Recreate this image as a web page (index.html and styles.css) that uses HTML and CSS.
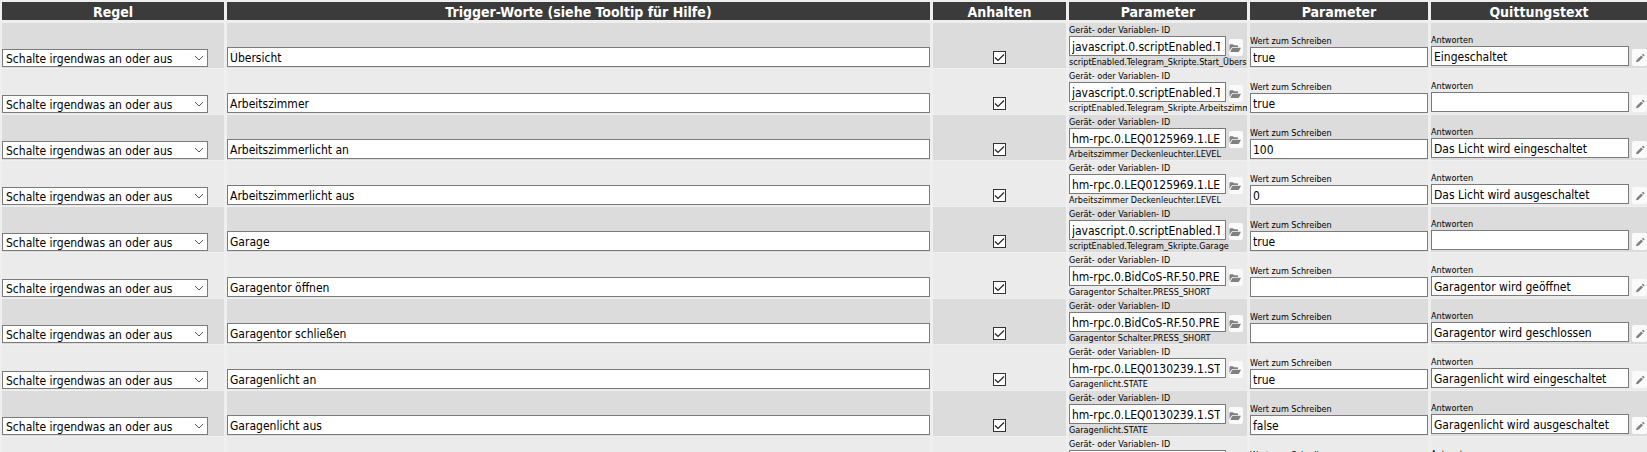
FILE: index.html
```
<!DOCTYPE html>
<html lang="de">
<head>
    <meta charset="UTF-8">
    <meta name="viewport" content="width=device-width, initial-scale=1.0">
    <title>Regeln</title>
    <link rel="stylesheet" href="styles.css">
</head>
<body>
    <div class="rules">
        <table class="rules-table">
            <colgroup>
                <col class="col-rule">
                <col class="col-words">
                <col class="col-stop">
                <col class="col-id">
                <col class="col-value">
                <col class="col-answer">
            </colgroup>
            <thead>
                <tr>
                    <th>Regel</th>
                    <th>Trigger-Worte (siehe Tooltip für Hilfe)</th>
                    <th>Anhalten</th>
                    <th>Parameter</th>
                    <th>Parameter</th>
                    <th>Quittungstext</th>
                </tr>
            </thead>
            <tbody id="ruleRows"></tbody>
        </table>
    </div>
    <script>
        const rules = [
            { words: 'Übersicht', id: 'javascript.0.scriptEnabled.Telegram_Skripte.Start_Übersicht', name: 'scriptEnabled.Telegram_Skripte.Start_Übersicht', value: 'true', answer: 'Eingeschaltet' },
            { words: 'Arbeitszimmer', id: 'javascript.0.scriptEnabled.Telegram_Skripte.Arbeitszimmer', name: 'scriptEnabled.Telegram_Skripte.Arbeitszimmer', value: 'true', answer: '' },
            { words: 'Arbeitszimmerlicht an', id: 'hm-rpc.0.LEQ0125969.1.LEVEL', name: 'Arbeitszimmer Deckenleuchter.LEVEL', value: '100', answer: 'Das Licht wird eingeschaltet' },
            { words: 'Arbeitszimmerlicht aus', id: 'hm-rpc.0.LEQ0125969.1.LEVEL', name: 'Arbeitszimmer Deckenleuchter.LEVEL', value: '0', answer: 'Das Licht wird ausgeschaltet' },
            { words: 'Garage', id: 'javascript.0.scriptEnabled.Telegram_Skripte.Garage', name: 'scriptEnabled.Telegram_Skripte.Garage', value: 'true', answer: '' },
            { words: 'Garagentor öffnen', id: 'hm-rpc.0.BidCoS-RF.50.PRESS_SHORT', name: 'Garagentor Schalter.PRESS_SHORT', value: '', answer: 'Garagentor wird geöffnet' },
            { words: 'Garagentor schließen', id: 'hm-rpc.0.BidCoS-RF.50.PRESS_SHORT', name: 'Garagentor Schalter.PRESS_SHORT', value: '', answer: 'Garagentor wird geschlossen' },
            { words: 'Garagenlicht an', id: 'hm-rpc.0.LEQ0130239.1.STATE', name: 'Garagenlicht.STATE', value: 'true', answer: 'Garagenlicht wird eingeschaltet' },
            { words: 'Garagenlicht aus', id: 'hm-rpc.0.LEQ0130239.1.STATE', name: 'Garagenlicht.STATE', value: 'false', answer: 'Garagenlicht wird ausgeschaltet' },
            { words: '', id: '', name: '', value: '', answer: '' }
        ]

        const folderIcon = `<svg class="icon" viewBox="0 0 12 12"><path d="M0.5 9V3Q0.5 2.3 1.2 2.3H4L5 3.3H8.3Q9 3.3 9 4V5H4Q3 5 2.5 5.8Z"/><path d="M4.2 5.8H12L10.2 9.3Q9.9 10 9.1 10H1.2L3.2 6.3Q3.5 5.8 4.2 5.8Z"/></svg>`
        const pencilIcon = `<svg class="icon" viewBox="0 0 12 12"><path d="M2 10.3L2.6 8L7.2 3.4L9 5.2L4.4 9.7Z"/><path d="M7.9 2.7L8.6 2Q9 1.6 9.4 2L10.4 3Q10.8 3.4 10.4 3.8L9.7 4.5Z"/></svg>`

        function ruleRow(rule, i) {
            return `<tr>
                <td><select class="field rule" aria-label="Regel"><option>Schalte irgendwas an oder aus</option></select></td>
                <td><input class="field" type="text" aria-label="Trigger-Worte" value="${rule.words}"></td>
                <td class="stop"><input class="check" type="checkbox" aria-label="Anhalten" checked></td>
                <td class="device">
                    <label for="id${i}">Gerät- oder Variablen- ID</label>
                    <div class="line">
                        <input class="field" type="text" id="id${i}" value="${rule.id}">
                        <button class="btn" type="button" aria-label="ID auswählen">${folderIcon}</button>
                    </div>
                    <div class="name">${rule.name}</div>
                </td>
                <td>
                    <label for="value${i}">Wert zum Schreiben</label>
                    <input class="field" type="text" id="value${i}" value="${rule.value}">
                </td>
                <td class="answer">
                    <label for="answer${i}">Antworten</label>
                    <div class="line">
                        <input class="field" type="text" id="answer${i}" value="${rule.answer}">
                        <button class="btn" type="button" aria-label="Bearbeiten">${pencilIcon}</button>
                    </div>
                </td>
            </tr>`
        }

        document.getElementById('ruleRows').innerHTML = rules.map(ruleRow).join('')
    </script>
</body>
</html>
```
FILE: styles.css
```
* {
    box-sizing: border-box;
}
body {
    margin: 0;
    background: #efefef;
    color: #000;
    font-family: "DejaVu Sans Condensed", Tahoma, "DejaVu Sans", sans-serif;
    font-size: 12px;
}
.rules {
    height: 100vh;
    overflow: hidden;
    padding-top: 1px;
}
.rules-table {
    width: calc(100% + 4px);
    margin-left: -1px;
    table-layout: fixed;
    border-spacing: 3px 1px;
}
.col-rule {
    width: 222px;
}
.col-stop {
    width: 133px;
}
.col-id {
    width: 178px;
}
.col-value {
    width: 178px;
}
.col-answer {
    width: 216px;
}
th {
    height: 20px;
    padding: 2px 0 0;
    background: #3b3b3b;
    background-clip: padding-box;
    border-bottom: 2px solid #efefef;
    color: #fff;
    font-size: 14px;
    line-height: 16px;
}
td {
    height: 45px;
    padding: 0 0 1px;
    overflow: hidden;
    vertical-align: bottom;
}
tbody tr:nth-child(odd) td {
    background: #dcdcdc;
}
tbody tr:nth-child(even) td {
    background: #ebebeb;
}
label,
.name {
    display: block;
    min-height: 12px;
    font-size: 9px;
    line-height: 12px;
    white-space: nowrap;
}
.field {
    display: block;
    width: 100%;
    height: 20px;
    padding: 1px 2px 0;
    border: 1px solid #7a7a7a;
    border-radius: 0;
    background: #fff;
    color: #000;
    font-family: inherit;
    font-size: 12px;
    line-height: 17px;
}
.rule {
    width: 206px;
    height: 18px;
    padding: 1px 3px 0;
    line-height: 16px;
    appearance: none;
    background: #fff url("data:image/svg+xml,%3Csvg xmlns='http://www.w3.org/2000/svg' width='10' height='6'%3E%3Cpath d='M1 1L5 5L9 1' fill='none' stroke='%23555'/%3E%3C/svg%3E") no-repeat right 3px center;
}
.stop {
    padding-bottom: 4px;
}
.check {
    display: block;
    width: 13px;
    height: 13px;
    margin: 0 auto;
    appearance: none;
    border: 1px solid #333;
    background: #fff url("data:image/svg+xml,%3Csvg xmlns='http://www.w3.org/2000/svg' width='11' height='11'%3E%3Cpath d='M1 5.5L4 8.5L10 2.5' fill='none' stroke='%23222' stroke-width='1.2'/%3E%3C/svg%3E") center no-repeat;
}
.line {
    display: flex;
    align-items: flex-end;
    gap: 3px;
}
.line .field {
    flex: 1;
    min-width: 0;
}
.btn {
    flex: none;
    display: flex;
    align-items: center;
    width: 14px;
    height: 17px;
    padding: 0;
    border: none;
    border-radius: 2px;
    background: #fafafa;
}
.icon {
    width: 12px;
    height: 12px;
    fill: #808080;
}
.device {
    padding-bottom: 0;
}
.device .line {
    padding-right: 4px;
}
.device .field {
    padding-right: 5px;
}
.answer {
    padding-bottom: 2px;
}
.answer .btn {
    width: 15px;
    padding-left: 2px;
}
```
